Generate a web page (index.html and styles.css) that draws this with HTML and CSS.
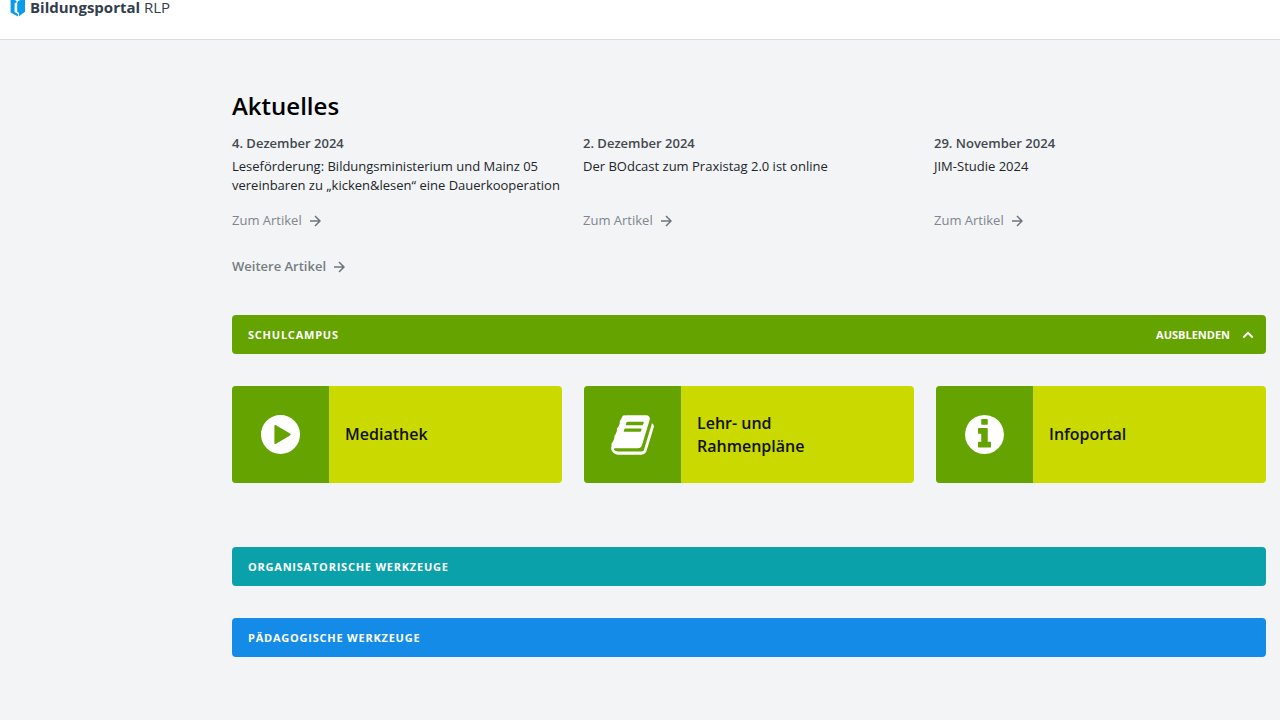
FILE: index.html
```html
<!DOCTYPE html>
<html lang="de">
<head>
<meta charset="utf-8">
<meta name="viewport" content="width=device-width, initial-scale=1">
<title>Bildungsportal RLP</title>
<link rel="stylesheet" href="styles.css">
</head>
<body>
<svg class="sprite" aria-hidden="true">
  <symbol id="arrow" viewBox="0 0 12 12"><path d="M1 6h10M6 1l5 5-5 5" fill="none" stroke="currentColor" stroke-width="1.5"/></symbol>
</svg>
<header class="topbar">
  <a class="brand" href="#">
    <svg class="brand-mark" viewBox="0 0 16 17" aria-hidden="true">
      <path d="M.6 0H4.800L6.500 1v1.500L4.600 3.300v8.700L8 13.900v2.600L.6 12.600z" fill="#0a9bf0"/>
      <path d="M8 1.200 10.400 0H15v11.800L9 16.200v-3.400L7.200 12V3z" fill="#0a9bf0"/>
    </svg>
    <span class="brand-name"><strong>Bildungsportal</strong> RLP</span>
  </a>
</header>
<main class="content">
  <section class="news">
    <h1 class="news-title">Aktuelles</h1>
    <div class="news-grid">
      <article class="news-item">
        <h2 class="news-date">4. Dezember 2024</h2>
        <p class="news-text">Leseförderung: Bildungsministerium und Mainz 05 vereinbaren zu „kicken&amp;lesen“ eine Dauerkooperation</p>
        <a class="more" href="#">Zum Artikel <svg class="arrow" aria-hidden="true"><use href="#arrow"/></svg></a>
      </article>
      <article class="news-item">
        <h2 class="news-date">2. Dezember 2024</h2>
        <p class="news-text">Der BOdcast zum Praxistag 2.0 ist online</p>
        <a class="more" href="#">Zum Artikel <svg class="arrow" aria-hidden="true"><use href="#arrow"/></svg></a>
      </article>
      <article class="news-item">
        <h2 class="news-date">29. November 2024</h2>
        <p class="news-text">JIM-Studie 2024</p>
        <a class="more" href="#">Zum Artikel <svg class="arrow" aria-hidden="true"><use href="#arrow"/></svg></a>
      </article>
    </div>
    <a class="more more-all" href="#">Weitere Artikel <svg class="arrow" aria-hidden="true"><use href="#arrow"/></svg></a>
  </section>

  <section class="group">
    <button class="bar bar-green" type="button" aria-expanded="true">
      <span class="bar-title">Schulcampus</span>
      <span class="bar-toggle">Ausblenden
        <svg class="chevron" viewBox="0 0 12 8" aria-hidden="true"><path d="M1.300 6.500 6 1.800l4.700 4.700" fill="none" stroke="currentColor" stroke-width="2"/></svg>
      </span>
    </button>
    <div class="tiles">
      <a class="tile" href="#">
        <span class="tile-icon"><svg class="icon-circle" viewBox="0 0 39 39" aria-hidden="true"><path fill="currentColor" fill-rule="evenodd" d="M19.500 0a19.500 19.500 0 1 1 0 39 19.500 19.500 0 0 1 0-39zM15 10.200c-.8-.5-1.600 0-1.600.9v16.800c0 .9.800 1.400 1.600.9l14-8.400c.8-.5.800-1.300 0-1.800z"/></svg></span>
        <span class="tile-label">Mediathek</span>
      </a>
      <a class="tile" href="#">
        <span class="tile-icon"><svg class="icon-book" viewBox="0 0 1664 1792" aria-hidden="true"><path fill="currentColor" d="M1639 478q40 57 18 129l-275 906q-19 64-76.500 107.500t-122.500 43.500h-923q-77 0-148.500-53.500t-99.500-131.500q-24-67-2-127 0-4 3-27t4-37q1-8-3-21.500t-3-19.500q2-11 8-21t16.500-23.500 16.500-23.500q23-38 45-91.500t30-91.500q3-10 .5-30t-.5-28q3-11 17-28t17-23q21-36 42-92t25-90q1-9-2.500-32t.5-28q4-13 22-30.500t22-22.500q19-26 42.500-84.500t27.500-96.500q1-8-3-25.500t-2-26.500q2-8 9-18t18-23 17-21q8-12 16.500-30.500t15-35 16-36 19.500-32 26.500-23.500 36-11.500 47.500 5.500l-1 3q38-9 51-9h761q74 0 114 56t18 130l-274 906q-36 119-71.500 153.500t-128.500 34.500h-869q-27 0-38 15-11 16-1 43 24 70 144 70h923q29 0 56-15.500t35-41.500l300-987q7-22 5-57 38 15 59 43zm-1064 2q-4 13 2 22.500t20 9.500h608q13 0 25.500-9.500t16.500-22.500l21-64q4-13-2-22.500t-20-9.500h-608q-13 0-25.500 9.500t-16.500 22.500zm-83 256q-4 13 2 22.500t20 9.500h608q13 0 25.500-9.500t16.500-22.500l21-64q4-13-2-22.500t-20-9.500h-608q-13 0-25.500 9.500t-16.500 22.500z"/></svg></span>
        <span class="tile-label">Lehr- und Rahmenpläne</span>
      </a>
      <a class="tile" href="#">
        <span class="tile-icon"><svg class="icon-circle" viewBox="0 128 1536 1536" aria-hidden="true"><path fill="currentColor" d="M1024 1376v-160q0-14-9-23t-23-9h-96v-512q0-14-9-23t-23-9h-320q-14 0-23 9t-9 23v160q0 14 9 23t23 9h96v320h-96q-14 0-23 9t-9 23v160q0 14 9 23t23 9h448q14 0 23-9t9-23zm-128-896v-160q0-14-9-23t-23-9h-192q-14 0-23 9t-9 23v160q0 14 9 23t23 9h192q14 0 23-9t9-23zm640 416q0 209-103 385.500t-279.500 279.500-385.500 103-385.500-103-279.500-279.500-103-385.500 103-385.500 279.500-279.500 385.500-103 385.500 103 279.500 279.500 103 385.500z"/></svg></span>
        <span class="tile-label">Infoportal</span>
      </a>
    </div>
  </section>

  <section class="group tools">
    <button class="bar bar-teal" type="button" aria-expanded="false"><span class="bar-title">Organisatorische Werkzeuge</span></button>
    <button class="bar bar-blue" type="button" aria-expanded="false"><span class="bar-title">Pädagogische Werkzeuge</span></button>
  </section>
</main>
</body>
</html>
```
FILE: styles.css
```css
* { box-sizing: border-box; }

body {
  margin: 0;
  background: #f2f4f6;
  color: #212529;
  font-family: "Open Sans", sans-serif;
  font-size: 13px;
  line-height: 19px;
}

a { color: inherit; text-decoration: none; }
h1, h2, p { margin: 0; }
.sprite { display: none; }

.topbar {
  height: 40px;
  padding: 0 10px;
  background: #fff;
  border-bottom: 1px solid #d9dde1;
}

.brand {
  display: flex;
  align-items: flex-start;
  gap: 4px;
  color: #323d4d;
  font-size: 15px;
  line-height: 14px;
}

.brand-mark { width: 16px; height: 17px; }

.content { padding: 52px 14px 48px 232px; }

.news-title {
  margin-bottom: 14px;
  color: #000;
  font-size: 24px;
  font-weight: 600;
  line-height: 28px;
}

.news-grid {
  display: grid;
  grid-template-columns: repeat(3, 1fr);
  gap: 19px;
}

.news-item { display: flex; flex-direction: column; align-items: flex-start; }

.news-date {
  margin-bottom: 4px;
  color: #42484e;
  font-size: 13px;
  font-weight: 600;
  line-height: 19px;
}

.news-text { margin-bottom: 16px; }

.more {
  display: inline-flex;
  align-items: center;
  gap: 7px;
  margin-top: auto;
  color: #7f868c;
}

.more-all { margin-top: 27px; color: #757c82; font-weight: 600; }
.arrow { width: 12px; height: 12px; color: #6c757d; }

.group { margin-top: 39px; }

.bar {
  display: flex;
  align-items: center;
  justify-content: space-between;
  width: 100%;
  height: 39px;
  padding: 0 12px 0 16px;
  border: 0;
  border-radius: 4px;
  color: #fff;
  font: 700 11px/18px "Open Sans", sans-serif;
  text-transform: uppercase;
}

.bar-green { background: #64a300; }
.bar-teal { background: #0ba1ab; }
.bar-blue { background: #148be6; }
.bar-title { letter-spacing: 0.07em; }
.bar-toggle { display: flex; align-items: center; gap: 12px; }
.chevron { width: 12px; height: 8px; }

.tiles {
  display: grid;
  grid-template-columns: repeat(3, 1fr);
  gap: 22px;
  margin-top: 32px;
}

.tile {
  display: flex;
  min-height: 97px;
  overflow: hidden;
  border-radius: 4px;
  background: #cad900;
  color: #111;
  font-size: 16px;
  font-weight: 600;
  line-height: 23px;
}

.tile-icon {
  display: flex;
  flex: 0 0 97px;
  align-items: center;
  justify-content: center;
  background: #64a300;
  color: #fff;
}

.icon-circle { width: 39px; height: 39px; }
.icon-book { width: 43px; height: 46px; }
.tile-label { align-self: center; max-width: 160px; padding: 0 16px; }

.tools {
  display: grid;
  gap: 32px;
  margin-top: 64px;
}
```
